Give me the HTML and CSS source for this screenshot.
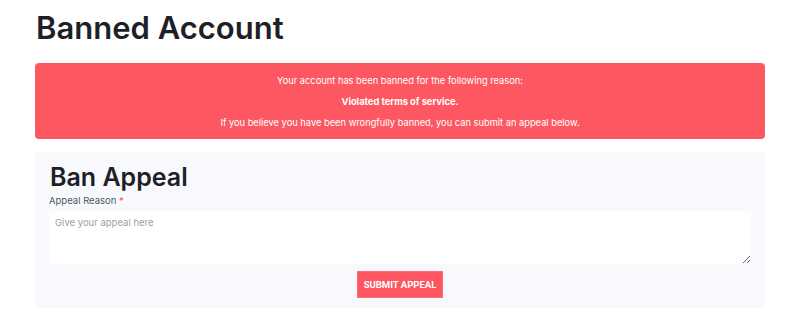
FILE: index.html
```html
<!DOCTYPE html>
<html lang="en">
  <head>
    <meta charset="UTF-8" />
    <meta name="viewport" content="width=device-width, initial-scale=1.0" />
    <title>Banned Account</title>
    <link rel="stylesheet" href="styles.css">
  </head>

  <body>
    <div class="page">
      <h1 class="pageTitle">Banned Account</h1>

      <div class="banAlert">
        <p>Your account has been banned for the following reason:</p>
        <p class="banReason">Violated terms of service.</p>
        <p>If you believe you have been wrongfully banned, you can submit an appeal below.</p>
      </div>

      <form class="appealCard">
        <h2 class="appealTitle">Ban Appeal</h2>
        <label class="fieldLabel" for="reason">Appeal Reason <span class="required">*</span></label>
        <textarea id="reason" class="appealInput" placeholder="Give your appeal here"></textarea>
        <div class="actions">
          <button type="button" class="submitButton">SUBMIT APPEAL</button>
        </div>
      </form>
    </div>
  </body>
</html>
```

FILE: styles.css
```css
body {
  margin: 0;
  background-color: #ffffff;
  font-family: "Inter", "Noto Sans", sans-serif;
  color: #1e1f27;
}

.page {
  padding: 0 35px;
}

.pageTitle {
  margin: 0;
  padding-top: 8px;
  font-size: 31px;
  font-weight: 600;
  line-height: 40px;
  padding-left: 1px;
  color: #1e1f27;
}

.banAlert {
  margin-top: 15px;
  padding: 7px 16px 6px;
  background-color: #fd5861;
  border-radius: 4px;
  color: #ffffff;
  text-align: center;
  font-size: 9.3px;
  line-height: 21px;
}

.banAlert p {
  margin: 0;
}

.banReason {
  font-weight: 700;
}

.appealCard {
  display: flex;
  flex-direction: column;
  margin-top: 13px;
  padding: 10px 14px 10px;
  background-color: #f8f9fd;
  border-radius: 4px;
}

.appealTitle {
  margin: 0 0 0 1px;
  font-size: 25px;
  font-weight: 600;
  line-height: 31px;
}

.fieldLabel {
  font-size: 9.5px;
  line-height: 16px;
  color: #4f5468;
}

.required {
  color: #f0505a;
}

.appealInput {
  height: 53px;
  margin-top: 2px;
  padding: 6px 6px;
  border: none;
  border-radius: 0;
  background-color: #ffffff;
  font-family: inherit;
  font-size: 9.5px;
  resize: vertical;
  box-sizing: border-box;
}

.appealInput::placeholder {
  color: #9b9ea8;
}

.actions {
  display: flex;
  justify-content: center;
  margin-top: 7px;
}

.submitButton {
  width: 86px;
  height: 27px;
  padding: 0;
  border: 1px solid #ff6b73;
  background-color: #fd5661;
  color: #ffffff;
  font-family: "Roboto", sans-serif;
  font-size: 9.5px;
  font-weight: 700;
}
```
